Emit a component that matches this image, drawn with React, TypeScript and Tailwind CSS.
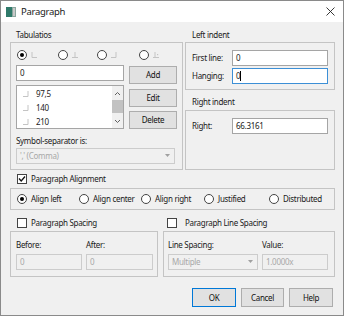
import React from "react";

const Radio = ({ checked = false }: { checked?: boolean }) => (
  <span className="w-[10px] h-[10px] rounded-full border border-[#444] bg-white flex items-center justify-center shrink-0">
    {checked && <span className="w-[4px] h-[4px] rounded-full bg-black" />}
  </span>
);

const Check = ({ checked = false }: { checked?: boolean }) => (
  <span className="w-[10px] h-[10px] border border-[#444] bg-white flex items-center justify-center shrink-0">
    {checked && (
      <svg width="8" height="8" viewBox="0 0 8 8">
        <path d="M1 3.5 L3.2 6 L7 1.5" stroke="#111" strokeWidth="1.3" fill="none" />
      </svg>
    )}
  </span>
);

const TabIcon = ({ kind }: { kind: "l" | "c" | "r" | "d" }) => (
  <svg width="8" height="8" viewBox="0 0 8 8" className="shrink-0">
    {kind === "l" && <path d="M2 1 V6.5 H7" stroke="#c4c4c4" strokeWidth="1" fill="none" />}
    {kind === "c" && <path d="M4 1 V6.5 M1 6.5 H7" stroke="#c4c4c4" strokeWidth="1" fill="none" />}
    {kind === "r" && <path d="M6 1 V6.5 H1" stroke="#c4c4c4" strokeWidth="1" fill="none" />}
    {kind === "d" && (
      <>
        <path d="M3 1 V6.5 M1 6.5 H7" stroke="#c4c4c4" strokeWidth="1" fill="none" />
        <rect x="5" y="3" width="1.2" height="1.2" fill="#c4c4c4" />
      </>
    )}
  </svg>
);

const Btn = ({ children, w, h = "h-[19px]", primary = false }: { children: React.ReactNode; w: string; h?: string; primary?: boolean }) => (
  <div
    className={`${w} ${h} flex items-center justify-center bg-[#e1e1e1] border ${
      primary ? "border-[#0078d7]" : "border-[#adadad]"
    } text-[#111]`}
  >
    {children}
  </div>
);

export default function App() {
  return (
    <div className="w-[344px] h-[316px] bg-[#f0f0f0] border border-[#8a8a8a] flex flex-col font-['Noto_Sans',sans-serif] text-[8px] tracking-[-0.3px] text-[#1a1a1a] leading-none overflow-hidden">
      {/* Title bar */}
      <div className="h-[21px] bg-white flex items-center pl-[5px] pr-[8px] shrink-0">
        <svg width="10" height="10" viewBox="0 0 10 10" className="mr-[5px]">
          <rect x="0" y="0" width="10" height="10" fill="#8aa69e" />
          <rect x="0" y="0" width="6" height="10" fill="#2f7a6a" />
          <rect x="7" y="1" width="2" height="8" fill="#c9c9c9" />
        </svg>
        <span className="text-[9.5px]">Paragraph</span>
        <svg width="9" height="9" viewBox="0 0 9 9" className="ml-auto">
          <path d="M0.5 0.5 L8.5 8.5 M8.5 0.5 L0.5 8.5" stroke="#222" strokeWidth="0.9" />
        </svg>
      </div>

      {/* Body */}
      <div className="flex-1 pl-[9px] pr-[8px] flex flex-col">
        {/* Top row */}
        <div className="flex gap-[2px] mt-[6px]">
          {/* Tabulations */}
          <div className="w-[173px] flex flex-col">
            <div className="h-[14px] flex items-center pl-[6px]">Tabulatios</div>
            <div className="h-[128px] border border-[#c4c4c4] px-[5px] pt-[6px] flex flex-col">
              <div className="h-[12px] flex items-center pl-[1px]">
                <div className="w-[41px] flex items-center gap-[3px]">
                  <Radio checked />
                  <TabIcon kind="l" />
                </div>
                <div className="w-[39px] flex items-center gap-[3px]">
                  <Radio />
                  <TabIcon kind="c" />
                </div>
                <div className="w-[42px] flex items-center gap-[3px]">
                  <Radio />
                  <TabIcon kind="r" />
                </div>
                <div className="flex items-center gap-[3px]">
                  <Radio />
                  <TabIcon kind="d" />
                </div>
              </div>
              <div className="flex items-start mt-[4px]">
                <div className="w-[108px] h-[16px] bg-white border border-[#a5a5a5] flex items-center pl-[3px]">0</div>
                <div className="ml-[5px] mt-[1px]">
                  <Btn w="w-[48px]" h="h-[18px]">Add</Btn>
                </div>
              </div>
              <div className="flex items-start mt-[1px]">
                <div className="w-[108px] h-[44px] bg-white border border-[#a5a5a5] flex">
                  <div className="flex-1 flex flex-col pt-[3px] gap-[5px]">
                    {["97,5", "140", "210"].map((t) => (
                      <div key={t} className="h-[9px] flex items-center pl-[5px] gap-[6px]">
                        <TabIcon kind="r" />
                        <span>{t}</span>
                      </div>
                    ))}
                  </div>
                  <div className="w-[11px] flex flex-col items-center bg-[#f0f0f0]">
                    <svg width="7" height="10" viewBox="0 0 7 10" className="mt-[3px]">
                      <path d="M1 6 L3.5 3.5 L6 6" stroke="#606060" strokeWidth="1" fill="none" />
                    </svg>
                    <div className="w-[11px] h-[13px] bg-[#c2c2c2] mt-[1px]" />
                    <div className="flex-1" />
                    <svg width="7" height="10" viewBox="0 0 7 10" className="mb-[2px]">
                      <path d="M1 4 L3.5 6.5 L6 4" stroke="#606060" strokeWidth="1" fill="none" />
                    </svg>
                  </div>
                </div>
                <div className="ml-[5px] pt-[4px] flex flex-col gap-[4px]">
                  <Btn w="w-[48px]" h="h-[18px]">Edit</Btn>
                  <Btn w="w-[48px]" h="h-[18px]">Delete</Btn>
                </div>
              </div>
              <div className="h-[12px] mt-[6px] flex items-center">Symbol-separator is:</div>
              <div className="w-[159px] h-[16px] mt-[1px] bg-[#f0f0f0] border border-[#cccccc] flex items-center pl-[3px] pr-[4px] text-[#a8a8a8]">
                <span>',' (Comma)</span>
                <svg width="5" height="4" viewBox="0 0 5 4" className="ml-auto">
                  <path d="M0 0 H5 L2.5 3 Z" fill="#a0a0a0" />
                </svg>
              </div>
            </div>
          </div>

          {/* Indents */}
          <div className="w-[150px] flex flex-col">
            <div className="h-[14px] flex items-center pl-[7px]">Left indent</div>
            <div className="h-[48px] border border-[#c4c4c4] pt-[7px] pl-[6px] flex flex-col gap-[2px]">
              <div className="flex items-center">
                <span className="w-[40px]">First line:</span>
                <div className="w-[96px] h-[16px] bg-white border border-[#a5a5a5] flex items-center pl-[3px]">0</div>
              </div>
              <div className="flex items-center">
                <span className="w-[40px]">Hanging:</span>
                <div className="w-[96px] h-[16px] bg-white border border-[#3c8fd6] flex items-center pl-[3px]">
                  0<span className="w-[1px] h-[10px] bg-black" />
                </div>
              </div>
            </div>
            <div className="h-[20px] flex items-end pb-[4px] pl-[7px]">Right indent</div>
            <div className="h-[60px] border border-[#c4c4c4] pt-[7px] pl-[6px]">
              <div className="flex items-center">
                <span className="w-[40px]">Right:</span>
                <div className="w-[96px] h-[16px] bg-white border border-[#a5a5a5] flex items-center pl-[3px]">66.3161</div>
              </div>
            </div>
          </div>
        </div>

        {/* Paragraph Alignment */}
        <div className="h-[18px] flex items-center pl-[7px] gap-[4px]">
          <Check checked />
          <span>Paragraph Alignment</span>
        </div>
        <div className="h-[22px] border border-[#c4c4c4] flex items-center pl-[6px]">
          {[
            ["Align left", "w-[62px]", true],
            ["Align center", "w-[62px]", false],
            ["Align right", "w-[63px]", false],
            ["Justified", "w-[65px]", false],
            ["Distributed", "", false],
          ].map(([t, w, c]) => (
            <div key={t as string} className={`${w as string} flex items-center gap-[4px]`}>
              <Radio checked={c as boolean} />
              <span>{t as string}</span>
            </div>
          ))}
        </div>

        {/* Spacing checkboxes */}
        <div className="h-[21px] pt-[5px] flex items-center">
          <div className="w-[153px] pl-[7px] flex items-center gap-[4px]">
            <Check />
            <span>Paragraph Spacing</span>
          </div>
          <div className="pl-[4px] flex items-center gap-[8px]">
            <Check />
            <span>Paragraph Line Spacing</span>
          </div>
        </div>

        {/* Spacing boxes */}
        <div className="flex gap-[5px]">
          <div className="w-[148px] h-[46px] border border-[#c4c4c4] pl-[5px] pt-[7px] flex gap-[4px]">
            <div className="flex flex-col">
              <div className="h-[12px] flex items-center">Before:</div>
              <div className="w-[66px] h-[16px] mt-[3px] bg-[#f0f0f0] border border-[#cccccc] flex items-center pl-[3px] text-[#a8a8a8]">0</div>
            </div>
            <div className="flex flex-col">
              <div className="h-[12px] flex items-center">After:</div>
              <div className="w-[67px] h-[16px] mt-[3px] bg-[#f0f0f0] border border-[#cccccc] flex items-center pl-[3px] text-[#a8a8a8]">0</div>
            </div>
          </div>
          <div className="flex-1 h-[46px] border border-[#c4c4c4] pl-[4px] pt-[7px] flex gap-[4px]">
            <div className="flex flex-col">
              <div className="h-[12px] flex items-center">Line Spacing:</div>
              <div className="w-[90px] h-[16px] mt-[3px] bg-[#f0f0f0] border border-[#cccccc] flex items-center pl-[3px] pr-[4px] text-[#a8a8a8]">
                <span>Multiple</span>
                <svg width="5" height="4" viewBox="0 0 5 4" className="ml-auto">
                  <path d="M0 0 H5 L2.5 3 Z" fill="#a0a0a0" />
                </svg>
              </div>
            </div>
            <div className="flex flex-col">
              <div className="h-[12px] flex items-center">Value:</div>
              <div className="w-[66px] h-[16px] mt-[3px] bg-[#f0f0f0] border border-[#cccccc] flex items-center pl-[3px] text-[#a8a8a8]">1.0000x</div>
            </div>
          </div>
        </div>

        {/* Buttons */}
        <div className="flex justify-end gap-[5px] mt-[11px] pr-[2px]">
          <Btn w="w-[44px]" primary>OK</Btn>
          <Btn w="w-[43px]">Cancel</Btn>
          <Btn w="w-[44px]">Help</Btn>
        </div>
      </div>
    </div>
  );
}
